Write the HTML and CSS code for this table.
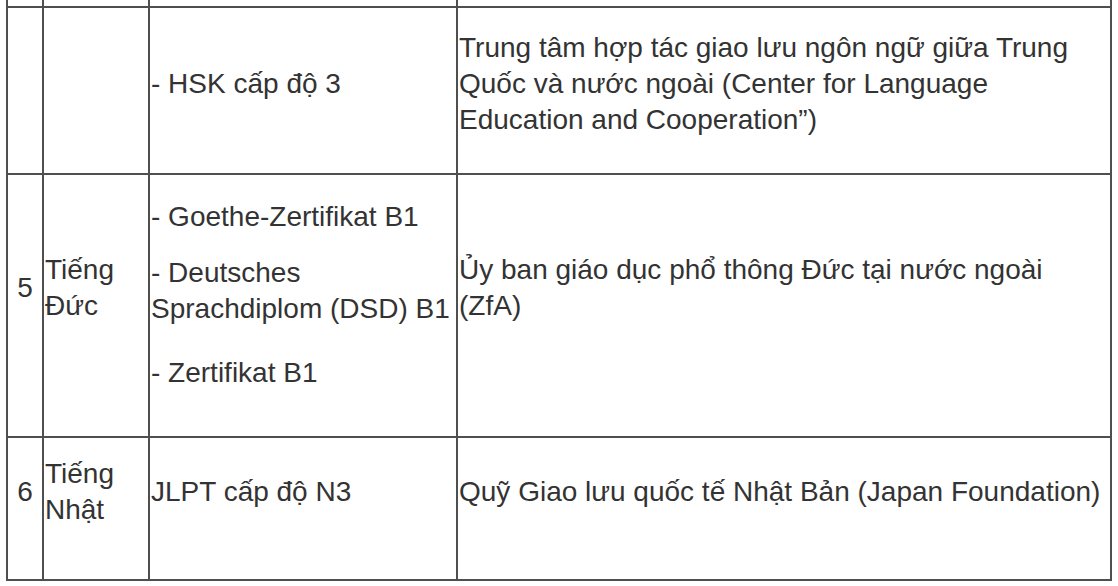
FILE: index.html
```html
<!DOCTYPE html>
<html lang="vi">
<head>
<meta charset="utf-8">
<title>Bảng chứng chỉ ngoại ngữ</title>
<link rel="stylesheet" href="styles.css">
</head>
<body>
<div class="wrap">
<table class="cert">
<colgroup>
<col class="c-no">
<col class="c-lang">
<col class="c-cert">
<col class="c-org">
</colgroup>
<tr class="r-cut"><td></td><td></td><td></td><td></td></tr>
<tr class="r4">
<td></td>
<td></td>
<td><p>- HSK cấp độ 3</p></td>
<td><p>Trung tâm hợp tác giao lưu ngôn ngữ giữa Trung Quốc và nước ngoài (Center for Language Education and Cooperation”)</p></td>
</tr>
<tr class="r5">
<td class="no"><p>5</p></td>
<td><p>Tiếng Đức</p></td>
<td class="list"><p>- Goethe-Zertifikat B1</p><p>- Deutsches Sprachdiplom (DSD) B1</p><p>- Zertifikat B1</p></td>
<td><p>Ủy ban giáo dục phổ thông Đức tại nước ngoài (ZfA)</p></td>
</tr>
<tr class="r6">
<td class="no"><p>6</p></td>
<td><p>Tiếng Nhật</p></td>
<td><p>JLPT cấp độ N3</p></td>
<td><p>Quỹ Giao lưu quốc tế Nhật Bản (Japan Foundation)</p></td>
</tr>
</table>
</div>
</body>
</html>
```

FILE: styles.css
```css
html, body {
  margin: 0;
  padding: 0;
  background: #ffffff;
}
.wrap {
  padding: 0 8px 0 6px;
}
.cert {
  border-collapse: collapse;
  table-layout: fixed;
  width: 1104px;
  font-family: "Liberation Sans", Arial, Helvetica, sans-serif;
  font-size: 28px;
  line-height: 36px;
  color: #333333;
}
.c-no { width: 36px; }
.c-lang { width: 106px; }
.c-cert { width: 308px; }
.c-org { width: 654px; }
.cert td {
  border: 2px solid #4f4f4f;
  padding: 0 1px;
  vertical-align: middle;
  text-align: left;
}
.cert td.no {
  text-align: center;
}
.cert p {
  margin: 0 0 14px;
}
.r-cut td {
  border-top: 0;
  height: 6px;
  padding: 0;
}
.r4 td { height: 165px; }
.r5 td { height: 261px; }
.r5 p { margin-bottom: 36px; }
.r5 td.list p { margin-bottom: 20px; }
.r5 td.list p:nth-child(2) { margin-bottom: 28px; }
.r5 td.list p:last-child { margin-bottom: 22px; }
.r6 td { height: 141px; }
.r6 p { margin-bottom: 34px; }
```
